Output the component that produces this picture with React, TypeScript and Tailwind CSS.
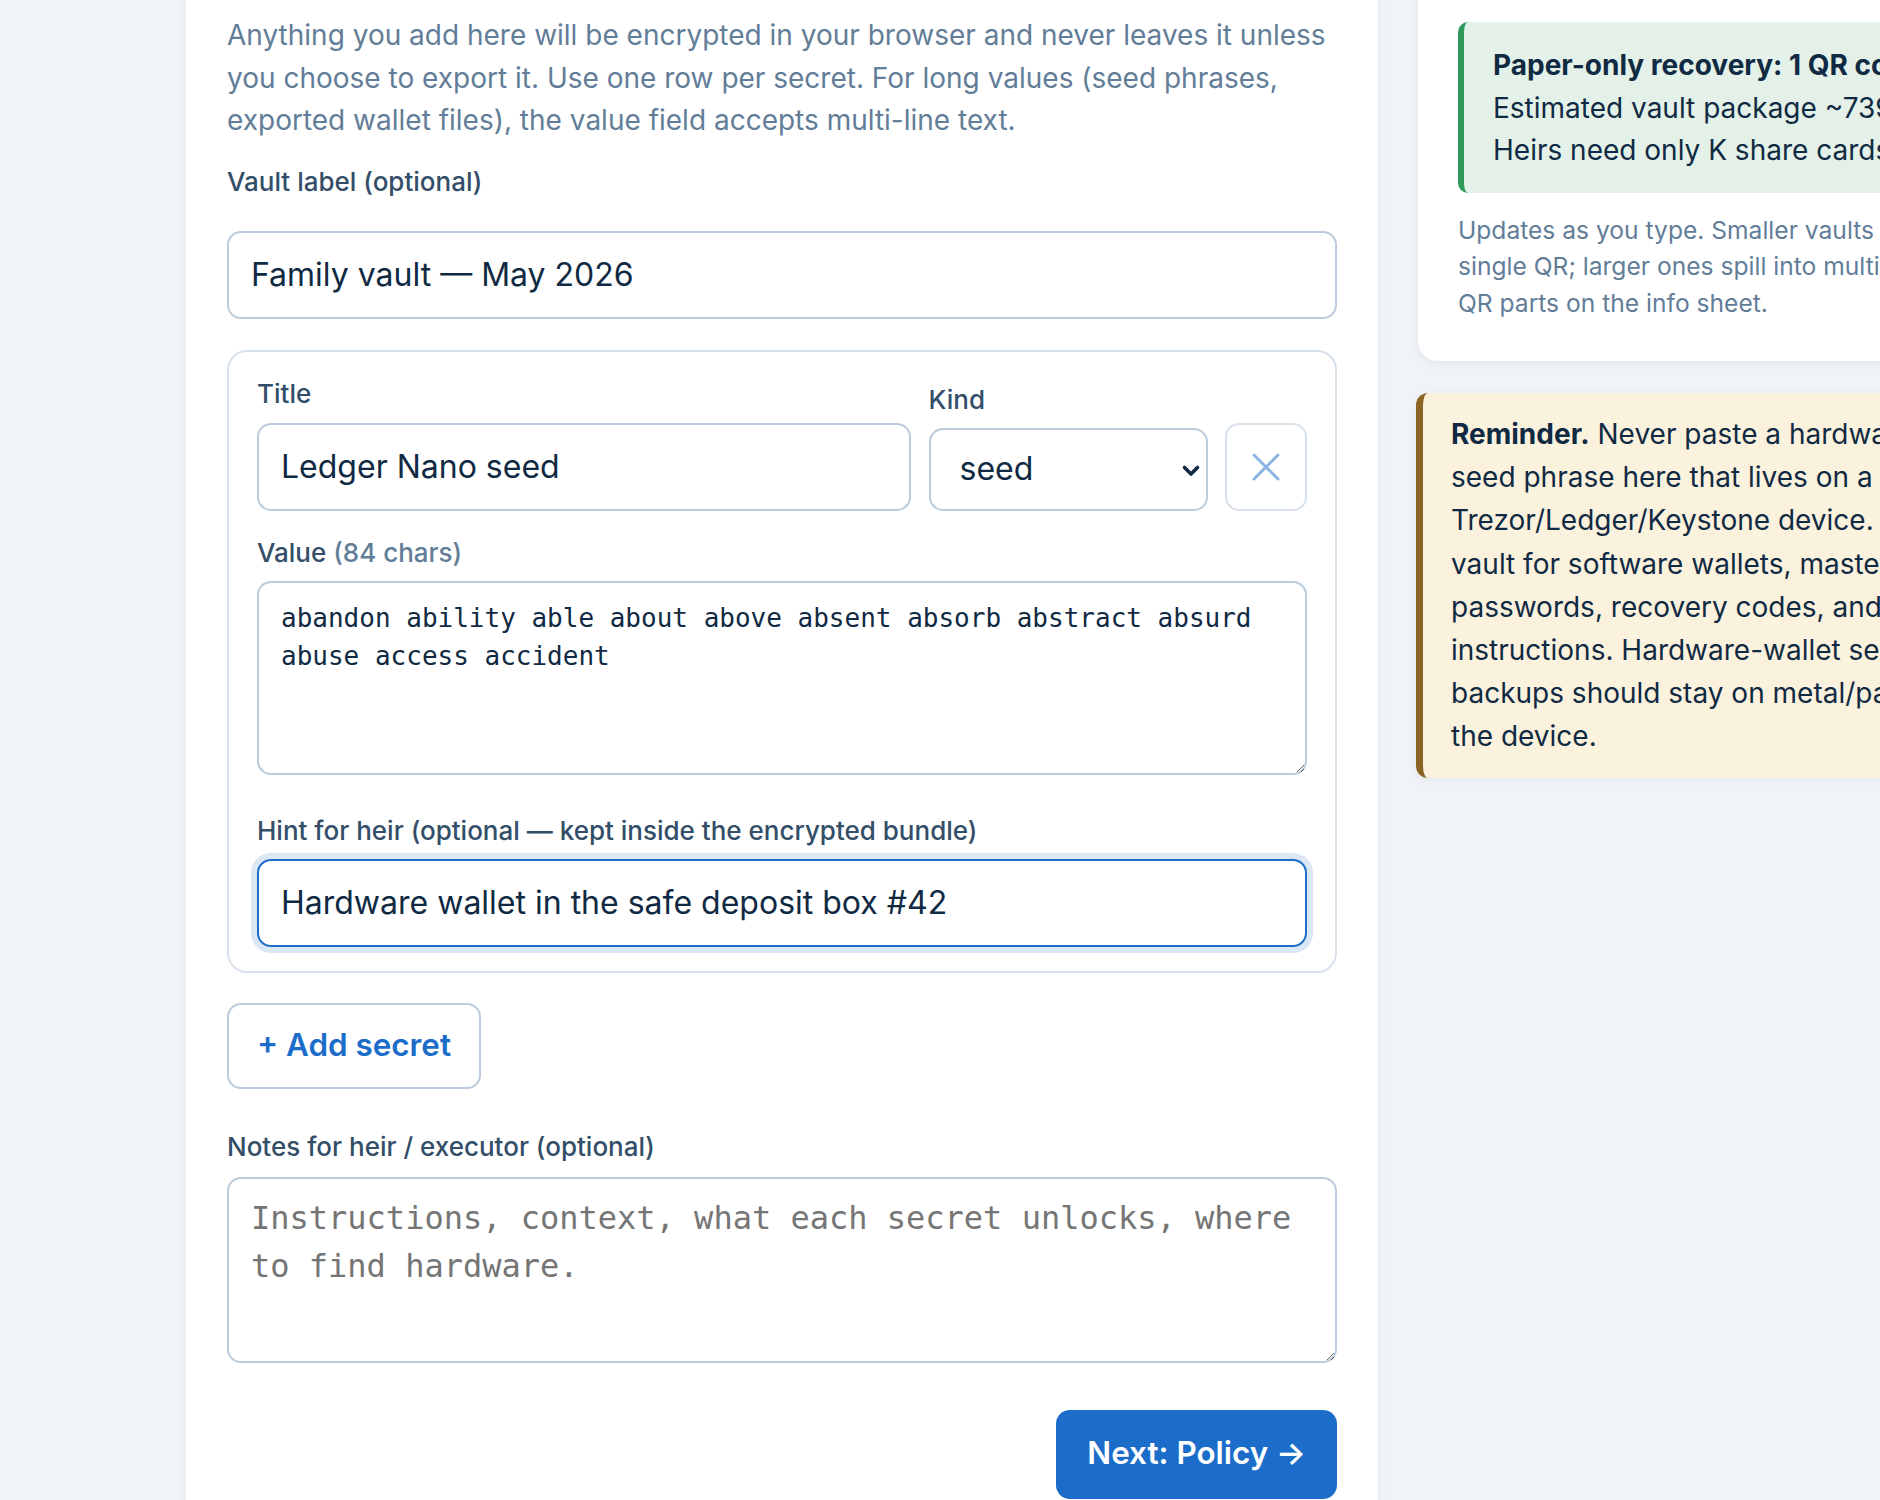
import { X } from 'lucide-react';

const label = "block text-[26px] leading-[36px] font-medium text-[#334e68]";
const field = "block w-full rounded-[14px] border-2 border-[#bcccdc] bg-white text-[#102a43] outline-none";

export default function App() {
  return (
    <div className="w-[1880px] h-[1500px] overflow-hidden bg-[#f0f4f8] font-['Inter',sans-serif]">
      <div className="-mt-[40px] flex items-start gap-[40px] pl-[186px]">
        {/* Step card: secrets */}
        <main className="w-[1192px] shrink-0 rounded-[27px] bg-white px-[41px] pt-[54px] pb-[80px] shadow-[0_2px_10px_rgba(16,42,67,0.06)]">
          <p className="text-[28px] leading-[42.5px] text-[#627d98]">
            Anything you add here will be encrypted in your browser and never leaves it unless you choose to export it.
            Use one row per secret. For long values (seed phrases, exported wallet files), the value field accepts
            multi-line text.
          </p>

          <label className={label + " mt-[22px]"}>Vault label (optional)</label>
          <input
            className={field + " mt-[31px] h-[88px] px-[22px] text-[32px]"}
            defaultValue="Family vault — May 2026"
          />

          {/* Secret row */}
          <div className="mt-[31px] rounded-[20px] border-2 border-[#d9e2ec] px-[28px] pt-[24.5px] pb-[24px]">
            <div className="grid grid-cols-[1fr_279px_82px] items-end gap-x-[17.5px]">
              <div>
                <label className={label + " mb-[10.5px]"}>Title</label>
                <input className={field + " h-[88px] px-[22px] text-[32px]"} defaultValue="Ledger Nano seed" />
              </div>
              <div>
                <label className={label + " mb-[10px]"}>Kind</label>
                <div className="relative">
                  <select
                    className="block h-[83px] w-full appearance-none rounded-[14px] border-2 border-[#bcccdc] bg-white pl-[29px] pr-[40px] text-[32px] text-[#102a43] outline-none"
                    defaultValue="seed"
                  >
                    <option value="seed">seed</option>
                    <option value="password">password</option>
                    <option value="note">note</option>
                  </select>
                  <svg
                    className="pointer-events-none absolute right-[7px] top-[36px] h-[14px] w-[20px] text-[#102a43]"
                    viewBox="0 0 20 14"
                    fill="none"
                    stroke="currentColor"
                    strokeWidth="3.6"
                    strokeLinecap="round"
                    strokeLinejoin="round"
                  >
                    <polyline points="3.5,3.5 10,10 16.5,3.5" />
                  </svg>
                </div>
              </div>
              <button
                className="flex h-[88px] w-[82px] items-center justify-center rounded-[14px] border-2 border-[#d9e2ec] bg-white text-[#8ab4e3]"
                title="Remove"
              >
                <X className="h-[48px] w-[48px]" strokeWidth={1.5} />
              </button>
            </div>

            <label className={label + " mt-[24px] mb-[10px]"}>
              Value <span className="text-[#627d98]">(84 chars)</span>
            </label>
            <textarea
              className={field + " h-[194px] resize-y px-[22px] pt-[16.5px] font-['DejaVu_Sans_Mono',monospace] text-[26px] leading-[38.4px]"}
              defaultValue="abandon ability able about above absent absorb abstract absurd abuse access accident"
            />

            <label className={label + " mt-[38px] mb-[10px]"}>
              Hint for heir (optional — kept inside the encrypted bundle)
            </label>
            <input
              className="block h-[88px] w-full rounded-[14px] border-2 border-[#1c6dc9] bg-white px-[22px] text-[32px] text-[#102a43] outline-none shadow-[0_0_0_6px_#dbe7f5]"
              defaultValue="Hardware wallet in the safe deposit box #42"
            />
          </div>

          <button className="mt-[30px] h-[86px] rounded-[14px] border-2 border-[#bcccdc] bg-white px-[28px] text-[31.4px] font-semibold text-[#1c6dc9]">
            + Add secret
          </button>

          <label className={label + " mt-[40px] mb-[12px]"}>Notes for heir / executor (optional)</label>
          <textarea
            className={field + " h-[186px] resize-y px-[22px] pt-[15px] font-['DejaVu_Sans_Mono',monospace] text-[32px] leading-[48px] placeholder:text-[#757575]"}
            placeholder="Instructions, context, what each secret unlocks, where to find hardware."
          />

          <div className="mt-[47px] flex justify-end">
            <button className="h-[89px] rounded-[14px] bg-[#1c6dc9] px-[31px] text-[31.4px] font-semibold text-white">
              Next: Policy →
            </button>
          </div>
        </main>

        {/* Side column */}
        <aside className="flex w-[618px] shrink-0 flex-col gap-[32px]">
          <section className="rounded-[20px] bg-white px-[40px] pt-[62px] pb-[40px] shadow-[0_2px_10px_rgba(16,42,67,0.07)]">
            <div className="rounded-[10px] border-l-[6px] border-[#2f9a5c] bg-[#e3f1e8] pl-[29px] pr-[24px] pt-[22px] pb-[21px] text-[28px] leading-[42.5px] text-[#102a43]">
              <div className="whitespace-nowrap font-bold">Paper-only recovery: 1 QR code</div>
              <div className="whitespace-nowrap">Estimated vault package ~739 bytes</div>
              <div className="whitespace-nowrap">Heirs need only K share cards + this sheet</div>
            </div>
            <p className="mt-[19px] max-w-[472px] text-[24.6px] leading-[36.5px] text-[#627d98]">
              Updates as you type. Smaller vaults fit a single QR; larger ones spill into multiple QR parts on the
              info sheet.
            </p>
          </section>

          <div className="-ml-[2px] rounded-[12px] border-l-[7px] border-[#8a6422] bg-[#fbf2de] pl-[28px] pr-[28px] pt-[20px] pb-[19px] text-[28px] leading-[43.2px] text-[#102a43] shadow-[0_2px_8px_rgba(16,42,67,0.06)]">
            <b>Reminder.</b> Never paste a hardware-wallet seed phrase here that lives on a Trezor/Ledger/Keystone
            device. Use this vault for software wallets, master passwords, recovery codes, and instructions.
            Hardware-wallet seed backups should stay on metal/paper with the device.
          </div>
        </aside>
      </div>
    </div>
  );
}
